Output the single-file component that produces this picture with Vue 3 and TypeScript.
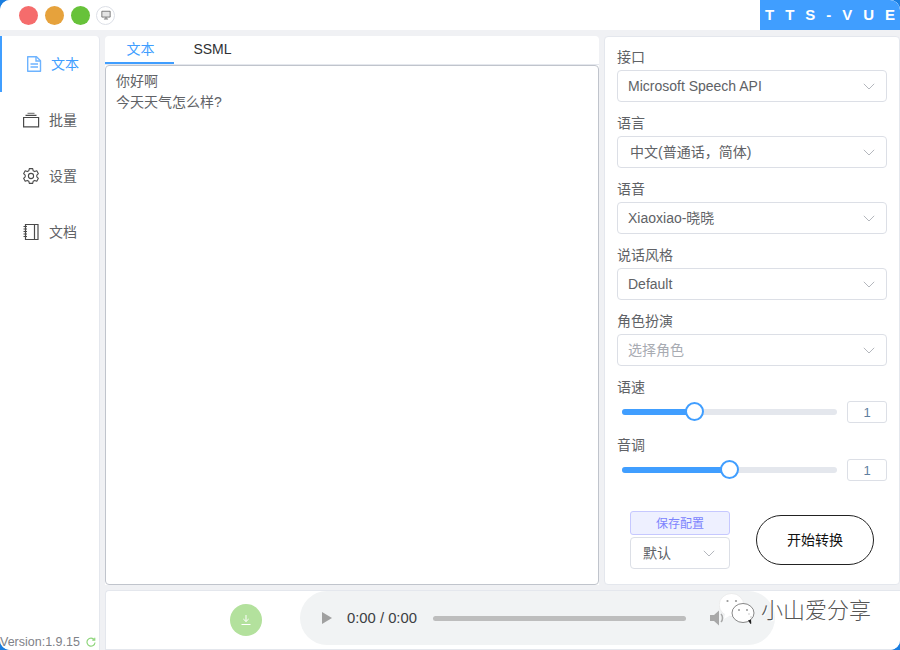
<script setup lang="ts">
import { ref } from 'vue'

interface NavItem { label: string; icon: string }
interface Field { label: string; value: string; placeholder?: boolean; offset?: boolean; cjk?: boolean }

const nav: NavItem[] = [
  { label: '文本', icon: 'doc' },
  { label: '批量', icon: 'stack' },
  { label: '设置', icon: 'gear' },
  { label: '文档', icon: 'book' },
]
const fields: Field[] = [
  { label: '接口', value: 'Microsoft Speech API' },
  { label: '语言', value: '中文(普通话，简体)', offset: true, cjk: true },
  { label: '语音', value: 'Xiaoxiao-晓晓', cjk: true },
  { label: '说话风格', value: 'Default' },
  { label: '角色扮演', value: '选择角色', placeholder: true, cjk: true },
]
const sliders = [
  { label: '语速', pct: 33.5, value: '1' },
  { label: '音调', pct: 50, value: '1' },
]
const text = ref('你好啊\n今天天气怎么样?')
</script>

<template>
  <div class="window">
    <header class="titlebar">
      <div class="lights">
        <span class="dot red"></span>
        <span class="dot amber"></span>
        <span class="dot green"></span>
        <span class="mini">
          <svg width="10" height="10" viewBox="0 0 12 12"><path d="M1 1.500h10v7H1z" fill="#e4e4e4" stroke="#666" stroke-width="1"/><path d="M3.500 10.800h5M6 8.500v2.300" stroke="#666" stroke-width="1" fill="none"/></svg>
        </span>
      </div>
      <div class="brand"><span class="brand-text">T T S - V U E</span></div>
    </header>

    <div class="content">
      <aside class="sidebar">
        <nav class="nav">
          <div v-for="(n, i) in nav" :key="n.label" class="nav-item" :class="{ active: i === 0 }">
            <svg v-if="n.icon === 'doc'" class="nav-icon" viewBox="0 0 18 18" fill="none" stroke="currentColor" stroke-width="1.4"><path d="M3.700 1.700h8.800l4 4v10.600H3.700z" stroke-linejoin="round"/><path d="M12 1.700v4.300h4.500M6.500 9h7.500M6.500 12h7.500"/></svg>
            <svg v-else-if="n.icon === 'stack'" class="nav-icon" viewBox="0 0 18 18" fill="none" stroke="currentColor" stroke-width="1.2"><path d="M1.600 6.500h15v9.300h-15z"/><path d="M3.500 4.300h11" stroke-width="1.300"/><path d="M5.500 2.300h7" stroke-width="1.300" stroke="#888"/></svg>
            <svg v-else-if="n.icon === 'gear'" class="nav-icon" viewBox="0 0 18 18" fill="none" stroke="currentColor" stroke-width="1.100"><path d="M7.300 1.600h3.400l.5 2.200 1.500.8 2.100-.8 1.600 2.900-1.600 1.500v1.600l1.600 1.500-1.600 2.900-2.100-.8-1.500.8-.5 2.200H7.300l-.5-2.200-1.500-.8-2.100.8-1.600-2.900 1.600-1.500V8.200L1.600 6.700l1.600-2.900 2.100.8 1.500-.8z" stroke-linejoin="round"/><circle cx="9" cy="9" r="2.600"/></svg>
            <svg v-else class="nav-icon" viewBox="0 0 18 18" fill="none" stroke="currentColor" stroke-width="1.200"><path d="M3.500 1.500h12.500v15H3.500zM12.500 1.500v15M1.500 3.500h3.500M1.500 6h3.500M1.500 8.500h3.500M1.500 11h3.500M1.500 13.500h3.500"/></svg>
            <span class="raised">{{ n.label }}</span>
          </div>
        </nav>
        <div class="version">
          <span>Version:1.9.15</span>
          <svg class="refresh" width="10" height="10" viewBox="0 0 12 12" fill="none" stroke="#8fd67c" stroke-width="1.400"><path d="M10 3.500A4.800 4.800 0 1 0 10.800 6.500"/><path d="M10.500 .8v3h-3"/></svg>
        </div>
      </aside>

      <div class="workspace">
        <div class="top-row">
          <main class="editor">
            <div class="tabs">
              <div class="tab active">文本</div>
              <div class="tab">SSML</div>
            </div>
            <div class="text-box">
              <div v-for="line in text.split('\n')" :key="line" class="text-line">{{ line }}</div>
            </div>
          </main>

          <section class="panel">
            <div v-for="f in fields" :key="f.label" class="field">
              <label class="field-label">{{ f.label }}</label>
              <div class="select">
                <span :class="{ placeholder: f.placeholder, shifted: f.offset, raised: f.cjk }">{{ f.value }}</span>
                <svg class="chev" width="12" height="7" viewBox="0 0 12 7" fill="none" stroke="#b4b7bd" stroke-width="1"><path d="M.8.800 6 6 11.200.8"/></svg>
              </div>
            </div>

            <div v-for="s in sliders" :key="s.label" class="slider-field">
              <label class="field-label">{{ s.label }}</label>
              <div class="slider-row">
                <div class="track">
                  <div class="fill" :style="{ width: s.pct + '%' }"></div>
                  <div class="thumb" :style="{ left: s.pct + '%' }"></div>
                </div>
                <div class="num">{{ s.value }}</div>
              </div>
            </div>

            <div class="actions">
              <div class="config">
                <button class="save">保存配置</button>
                <div class="select small">
                  <span class="raised">默认</span>
                  <svg class="chev" width="12" height="7" viewBox="0 0 12 7" fill="none" stroke="#b4b7bd" stroke-width="1"><path d="M.8.800 6 6 11.200.8"/></svg>
                </div>
              </div>
              <button class="start">开始转换</button>
            </div>
          </section>
        </div>

        <footer class="player">
          <div class="download">
            <svg width="12" height="12" viewBox="0 0 12 12" fill="none" stroke="#fff" stroke-width="1"><path d="M6 1v6.500M3.300 5 6 7.500 8.700 5M1.500 10.500h9"/></svg>
          </div>
          <div class="audio">
            <span class="play"></span>
            <span class="time">0:00 / 0:00</span>
            <span class="bar"></span>
            <svg class="vol" width="18" height="18" viewBox="0 0 18 18" fill="#a8a8a8"><path d="M1 6h4l5-4.500v15L5 12H1z"/><path d="M12 5c2 2 2 6 0 8" fill="none" stroke="#a8a8a8" stroke-width="1.500"/></svg>
          </div>
          <div class="watermark">
            <svg class="wm-icon" width="37" height="32" viewBox="0 0 37 32">
              <ellipse cx="12.500" cy="12" rx="12.300" ry="11.500" fill="#fff" stroke="#e2e2e2" stroke-width=".6"/>
              <path d="M6 21l-1 5 6-3.500z" fill="#fff"/>
              <ellipse cx="24" cy="20" rx="11" ry="9.500" fill="#fff" stroke="#555" stroke-width=".7"/>
              <path d="M29 27.500l2.500 3.500.8-.5-.3-4z" fill="#222"/>
              <circle cx="8.500" cy="8" r="1.100" fill="#999"/><circle cx="17" cy="8" r="1.100" fill="#999"/>
              <circle cx="20" cy="17" r="1" fill="#999"/><circle cx="28" cy="17" r="1" fill="#999"/>
              <circle cx="30" cy="21" r="1" fill="#ddd"/><circle cx="32" cy="24" r="1" fill="#ddd"/>
            </svg>
            <span class="wm-text">小山爱分享</span>
          </div>
        </footer>
      </div>
    </div>
  </div>
</template>

<style>
html, body { margin: 0; padding: 0; background: #1a7ee0; }
</style>

<style scoped>
.window {
  width: 900px;
  height: 650px;
  background: #f0f1f4;
  border-radius: 10px;
  overflow: hidden;
  display: flex;
  flex-direction: column;
  font-family: "Liberation Sans", "Noto Sans CJK SC", sans-serif;
  font-size: 14px;
  color: #606266;
}
.titlebar {
  height: 30px;
  flex: none;
  background: #fff;
  display: flex;
  justify-content: space-between;
}
.lights { display: flex; align-items: center; padding: 0 0 0 19px; }
.dot { width: 19px; height: 19px; border-radius: 50%; margin-right: 7px; }
.red { background: #f56c6c; }
.amber { background: #e6a23c; }
.green { background: #67c23a; }
.mini {
  width: 19px; height: 19px; border: 1px solid #dcdfe6; border-radius: 50%;
  display: flex; align-items: center; justify-content: center; margin-left: -1px;
  background: #fff; box-sizing: border-box;
}
.brand {
  width: 140px;
  background: #409eff;
  color: #fff;
  font-weight: 700;
  font-size: 15px;
  line-height: 30px;
  padding-left: 5px;
  box-sizing: border-box;
}
.brand-text { letter-spacing: 3.400px; white-space: pre; display: block; width: 133px; }
.raised { margin-bottom: 2px; }
.content { flex: 1; display: flex; padding-top: 6px; min-height: 0; }
.sidebar {
  width: 100px;
  flex: none;
  background: #fff;
  border-top-right-radius: 4px;
  border-right: 1px solid #e4e7ed;
  box-sizing: border-box;
  display: flex;
  flex-direction: column;
  justify-content: space-between;
}
.nav-item {
  height: 56px;
  display: flex;
  align-items: center;
  gap: 9px;
  font-size: 14px;
  color: #606266;
  box-sizing: border-box;
  padding: 0 0 1px 22px;
}
.nav-item.active { color: #409eff; border-left: 2px solid #409eff; }
.nav-icon { width: 18px; height: 18px; flex: none; color: #4a4a4a; }
.nav-item.active .nav-icon { color: #6db3ff; }
.version {
  font-size: 12.500px;
  color: #7f8288;
  display: flex;
  align-items: center;
  gap: 6px;
  white-space: nowrap;
  height: 15px;
  line-height: 15px;
}
.refresh { margin-bottom: 2px; }
.workspace {
  flex: 1;
  min-width: 0;
  display: flex;
  flex-direction: column;
  padding-left: 5px;
  gap: 5px;
}
.top-row { flex: 1; display: flex; gap: 5px; min-height: 0; }
.editor {
  width: 494px;
  flex: none;
  background: #fff;
  border-radius: 4px 4px 0 0;
  display: flex;
  flex-direction: column;
}
.tabs { display: flex; height: 28px; flex: none; border-bottom: 1px solid #e4e7ed; }
.tab {
  width: 69px;
  text-align: center;
  line-height: 26px;
  color: #303133;
  box-sizing: border-box;
  height: 28px;
}
.tab.active { color: #409eff; border-bottom: 2px solid #409eff; padding-left: 2px; }
.tab + .tab { width: 77px; }
.text-box {
  flex: 1;
  border: 1px solid #c0c4cc;
  border-radius: 4px;
  padding: 5px 10px;
  line-height: 21px;
  color: #606266;
  background: #fff;
}
.panel {
  flex: 1;
  background: #fff;
  border: 1px solid #e4e7ed;
  border-radius: 4px;
  box-sizing: border-box;
  padding: 0 12px;
  display: flex;
  flex-direction: column;
}
.field { height: 66px; }
.field-label {
  display: block;
  height: 33px;
  line-height: 40px;
  color: #606266;
  font-size: 14px;
}
.select {
  height: 32px;
  border: 1px solid #dcdfe6;
  border-radius: 4px;
  box-sizing: border-box;
  display: flex;
  align-items: center;
  justify-content: space-between;
  padding: 0 11px 0 10px;
  background: #fff;
  color: #606266;
}
.shifted { margin-left: 2px; }
.placeholder { color: #a8abb2; }
.slider-field { height: 58px; }
.slider-field .field-label { height: 31px; line-height: 40px; }
.slider-row { display: flex; align-items: center; height: 27px; }
.track {
  position: relative;
  margin-left: 5px;
  width: 215px;
  height: 6px;
  border-radius: 3px;
  background: #e4e7ed;
}
.fill { height: 6px; border-radius: 3px; background: #409eff; }
.thumb {
  position: absolute;
  top: 50%;
  width: 19px;
  height: 19px;
  margin: -9.500px 0 0 -9.500px;
  border: 2px solid #409eff;
  border-radius: 50%;
  background: #fff;
  box-sizing: border-box;
}
.num {
  margin-left: 10px;
  width: 40px;
  height: 22px;
  border: 1px solid #dcdfe6;
  border-radius: 3px;
  box-sizing: border-box;
  text-align: center;
  font-size: 13px;
  line-height: 21px;
  color: #5f7f9f;
}
.actions { display: flex; align-items: center; padding: 28px 0 0 13px; }
.config { display: flex; flex-direction: column; gap: 2px; width: 100px; }
.save {
  height: 24px;
  padding: 0 0 2px;
  border: 1px solid #c6c8ff;
  background: #eef0ff;
  color: #7c83fd;
  border-radius: 3px;
  font: inherit;
  font-size: 12px;
}
.small { padding: 0 14px 0 12px; }
.start {
  margin-left: 26px;
  width: 118px;
  height: 50px;
  padding: 0 0 2px;
  border-radius: 25px;
  border: 1px solid #222;
  background: #fff;
  color: #111;
  font: inherit;
  font-size: 14px;
}
.player {
  height: 60px;
  flex: none;
  background: #fff;
  border: 1px solid #e4e7ed;
  border-right: 0;
  border-radius: 4px 0 0 0;
  position: relative;
  display: flex;
  align-items: center;
  box-sizing: border-box;
  padding-left: 124px;
}
.download {
  width: 32px;
  height: 32px;
  border-radius: 50%;
  background: #b3e19d;
  display: flex;
  align-items: center;
  justify-content: center;
}
.audio {
  margin-left: 38px;
  width: 475px;
  height: 54px;
  border-radius: 27px;
  background: #f1f3f4;
  margin-top: -4px;
  display: flex;
  align-items: center;
  padding-left: 22px;
  box-sizing: border-box;
  color: #3c4043;
}
.play {
  width: 0; height: 0;
  border-left: 10px solid #a0a0a0;
  border-top: 6px solid transparent;
  border-bottom: 6px solid transparent;
}
.time { margin-left: 15px; font-size: 14.800px; white-space: nowrap; }
.bar { margin-left: 16px; width: 253px; height: 5px; border-radius: 3px; background: #bdbdbd; }
.vol { margin-left: 23px; }
.watermark {
  position: absolute;
  left: 613px;
  top: 2px;
  display: flex;
  align-items: flex-start;
  color: #4a4a4a;
}
.wm-text {
  font-size: 22px;
  line-height: 30px;
  margin: 3px 0 0 5px;
  color: #555;
  font-weight: 300;
  text-shadow: 1px 1px 0 #fff;
}
</style>
